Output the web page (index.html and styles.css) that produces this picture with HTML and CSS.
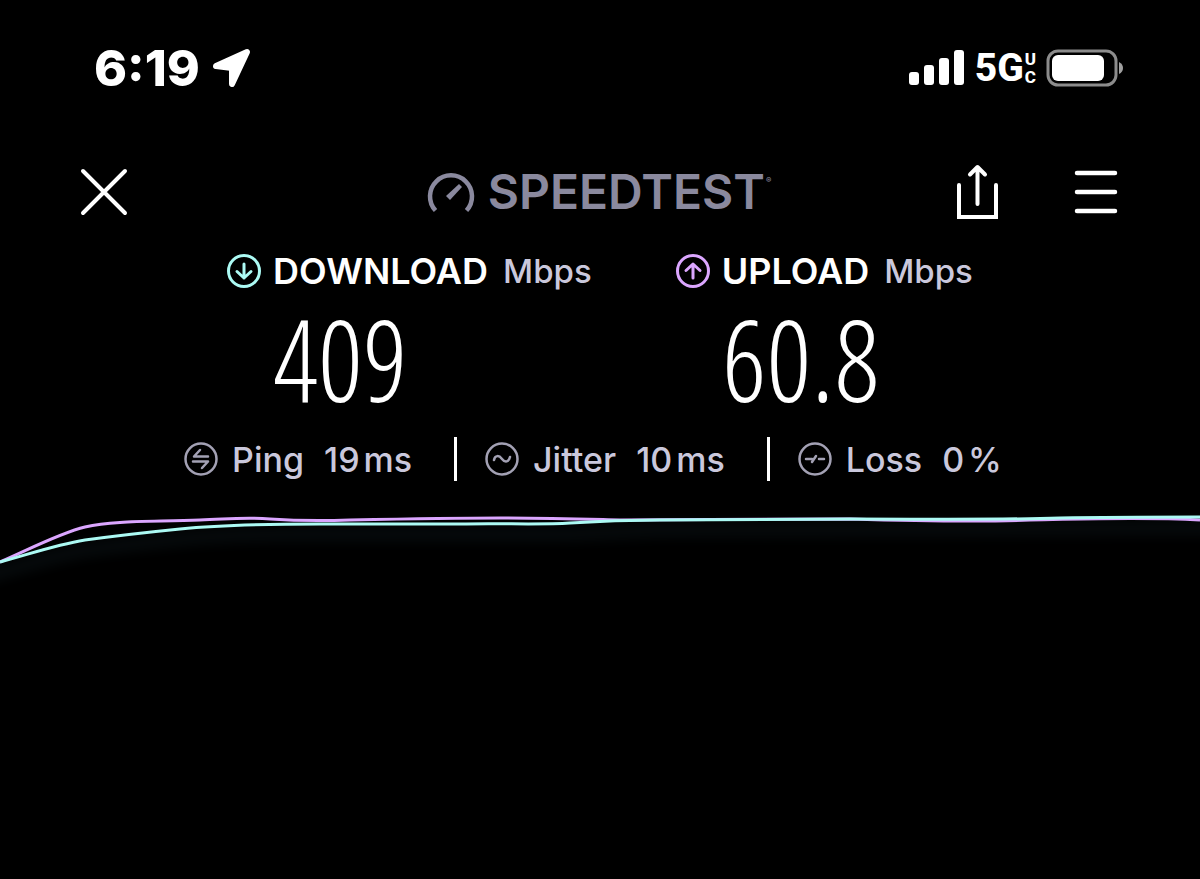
FILE: index.html
```
<!DOCTYPE html>
<html lang="en">
<head>
    <meta charset="UTF-8">
    <meta name="viewport" content="width=device-width, initial-scale=1.0">
    <title>Speedtest Result</title>
    <link rel="stylesheet" href="styles.css">
</head>
<body>
    <div class="status-bar">
        <div class="status-left">
            <span class="time">6:19</span>
            <svg width="40" height="40" viewBox="0 0 40 40" aria-hidden="true">
                <path d="M4 18 L35 4 L20 36 L20 20 Z" fill="#fff" stroke="#fff" stroke-width="6" stroke-linejoin="round"/>
            </svg>
        </div>
        <div class="status-right">
            <svg width="56" height="36" viewBox="0 0 56 36" fill="#fff" aria-hidden="true">
                <rect x="0" y="22" width="10" height="13" rx="3"/>
                <rect x="15" y="15" width="10" height="20" rx="3"/>
                <rect x="30" y="8" width="10" height="27" rx="3"/>
                <rect x="45" y="0" width="10" height="35" rx="3"/>
            </svg>
            <span class="network">5G</span>
            <span class="network-band"><span>U</span><span>C</span></span>
            <svg width="78" height="38" viewBox="0 0 78 38" aria-hidden="true">
                <rect x="2" y="2" width="68" height="34" rx="10" fill="none" stroke="#8c8c8c" stroke-width="3"/>
                <rect x="6" y="6" width="52" height="26" rx="6" fill="#fff"/>
                <path d="M73 13 Q77 15 77 19 Q77 23 73 25 Z" fill="#a0a0a0"/>
            </svg>
        </div>
    </div>

    <header class="header">
        <button type="button" class="icon-button close" aria-label="Close">
            <svg width="48" height="48" viewBox="0 0 48 48" fill="none" stroke="#fff" stroke-width="4" stroke-linecap="round">
                <path d="M3 3 L45 45 M45 3 L3 45"/>
            </svg>
        </button>
        <h1 class="logo">
            <svg width="48" height="42" viewBox="0 0 48 42" fill="none" aria-hidden="true">
                <path d="M8.500 39.500 A21 21 0 1 1 39.500 39.500" stroke="#8a899e" stroke-width="4.500"/>
                <path d="M32 13 L35 16 L23 29 L19 25 Z" fill="#8a899e"/>
            </svg>
            <span>SPEEDTEST</span><sup>®</sup>
        </h1>
        <div class="actions">
            <button type="button" class="icon-button" aria-label="Share">
                <svg width="44" height="56" viewBox="0 0 44 56" fill="none" stroke="#fff" stroke-width="4" stroke-linecap="round">
                    <path d="M3 21 V53 H40 V21"/>
                    <path d="M21.500 40 V3 M14 10.500 L21.500 3 L29 10.500" stroke-linejoin="round"/>
                </svg>
            </button>
            <button type="button" class="icon-button" aria-label="Menu">
                <svg width="44" height="44" viewBox="0 0 44 44" stroke="#fff" stroke-width="4.500" stroke-linecap="round">
                    <path d="M3 3 H41 M3 22 H41 M3 41 H41"/>
                </svg>
            </button>
        </div>
    </header>

    <main>
        <section class="results">
            <div class="result">
                <h2>
                    <svg width="34" height="34" viewBox="0 0 34 34" fill="none" stroke="#acfaf4" stroke-width="3" stroke-linecap="round" stroke-linejoin="round" aria-hidden="true">
                        <circle cx="17" cy="17" r="15.500"/>
                        <path d="M17 10 V24 M10 17.500 L17 24 L24 17.500"/>
                    </svg>
                    <span>DOWNLOAD</span>
                    <span class="unit">Mbps</span>
                </h2>
                <p class="speed">409</p>
            </div>
            <div class="result">
                <h2>
                    <svg width="34" height="34" viewBox="0 0 34 34" fill="none" stroke="#dba6ff" stroke-width="3" stroke-linecap="round" stroke-linejoin="round" aria-hidden="true">
                        <circle cx="17" cy="17" r="15.500"/>
                        <path d="M17 24 V10 M10 16.500 L17 10 L24 16.500"/>
                    </svg>
                    <span>UPLOAD</span>
                    <span class="unit">Mbps</span>
                </h2>
                <p class="speed">60.8</p>
            </div>
        </section>

        <ul class="stats">
            <li>
                <svg width="34" height="34" viewBox="0 0 34 34" fill="none" stroke="#a3a1b4" stroke-width="2.500" stroke-linecap="round" stroke-linejoin="round" aria-hidden="true">
                    <circle cx="17" cy="17" r="15.500"/>
                    <path d="M24 14.500 H10 L16 8 M9 19.500 H24 L18 26"/>
                </svg>
                <span class="name">Ping</span>
                <span class="value">19<small>ms</small></span>
            </li>
            <li>
                <svg width="34" height="34" viewBox="0 0 34 34" fill="none" stroke="#a3a1b4" stroke-width="2.500" stroke-linecap="round" aria-hidden="true">
                    <circle cx="17" cy="17" r="15.500"/>
                    <path d="M9 18 C10 13 14 13 17 17 S24 20 25 15"/>
                </svg>
                <span class="name">Jitter</span>
                <span class="value">10<small>ms</small></span>
            </li>
            <li>
                <svg width="34" height="34" viewBox="0 0 34 34" fill="none" stroke="#a3a1b4" stroke-width="2.500" stroke-linecap="round" stroke-linejoin="round" aria-hidden="true">
                    <circle cx="17" cy="17" r="15.500"/>
                    <path d="M8 17 H14 M14 20 L18 14 M21 17 H26"/>
                </svg>
                <span class="name">Loss</span>
                <span class="value">0<small>%</small></span>
            </li>
        </ul>

        <svg class="chart" viewBox="0 0 1200 100" preserveAspectRatio="none" role="img" aria-label="Download and upload speed over time">
            <defs>
                <filter id="blur" filterUnits="userSpaceOnUse" x="0" y="0" width="1200" height="100">
                    <feGaussianBlur stdDeviation="6"/>
                </filter>
            </defs>
            <path class="glow" filter="url(#blur)" d="M-30 82 L0 72 C30 64 55 55 85 50 C115 46 150 42 180 39 C220 35 270 34 320 34 H570 L660 30 L1230 28"/>
            <path class="upload-line" d="M0 62 C30 49 60 33 85 27 C115 20 155 22 200 20 C230 19 245 17 270 19 C300 21 320 21 350 20 C400 19 450 18 500 18 C550 18 580 19 620 20 C700 19 760 20 850 19 C920 21 980 22 1030 20 C1090 19 1140 17 1200 20"/>
            <path class="download-line" d="M0 62 C30 54 55 45 85 40 C115 36 150 32 180 29 C220 25 270 24 320 24 H460 C500 23 540 25 570 23 C600 21 620 20 660 20 C720 20 780 19 850 19 C930 19 1000 20 1060 18 C1110 17 1150 17 1200 17"/>
        </svg>
    </main>
</body>
</html>
```

FILE: styles.css
```
* {
    margin: 0;
    padding: 0;
    box-sizing: border-box;
}

body {
    font-family: Inter, "Liberation Sans", sans-serif;
    background-color: #000;
    color: #fff;
    min-height: 100vh;
}

svg {
    display: block;
    flex-shrink: 0;
}

/* Phone status bar */
.status-bar {
    display: flex;
    justify-content: space-between;
    align-items: center;
    height: 96px;
    padding: 40px 76px 0 94px;
}

.status-left,
.status-right {
    display: flex;
    align-items: center;
}

.status-left {
    gap: 12px;
}

.status-right {
    gap: 10px;
}

.time {
    font-size: 50px;
    font-weight: 800;
    line-height: 54px;
}

.network {
    font-family: Roboto, sans-serif;
    font-size: 39px;
    font-weight: 800;
    line-height: 56px;
}

.network-band {
    display: flex;
    flex-direction: column;
    margin-left: -9px;
    font-family: Roboto, sans-serif;
    font-size: 17px;
    font-weight: 800;
    line-height: 18px;
}

/* Top navigation */
.header {
    display: grid;
    grid-template-columns: 1fr auto 1fr;
    align-items: center;
    height: 60px;
    margin-top: 66px;
    padding: 0 82px 0 80px;
}

.icon-button {
    background: none;
    border: none;
    cursor: pointer;
}

.close {
    justify-self: start;
}

.logo {
    display: flex;
    align-items: center;
    gap: 13px;
    color: #8a899e;
    font-size: 48px;
    font-weight: 600;
    line-height: 60px;
}

.logo sup {
    align-self: flex-start;
    margin-left: -12px;
    font-size: 8px;
    line-height: 36px;
}

.actions {
    display: flex;
    justify-content: flex-end;
    align-items: center;
    gap: 74px;
}

/* Download and upload */
.results {
    display: flex;
    justify-content: center;
    gap: 84px;
    margin-top: 28px;
}

.result h2 {
    display: flex;
    align-items: center;
    gap: 12px;
    font-size: 36px;
    font-weight: 600;
    line-height: 42px;
}

.unit {
    margin-left: 3px;
    color: #cac8dc;
    font-size: 33px;
    font-weight: 500;
}

.speed {
    margin-bottom: 10px;
    padding-left: 46px;
    font-family: "Open Sans Condensed Light", Roboto, sans-serif;
    font-size: 112px;
    font-weight: 200;
    line-height: 134px;
}

/* Ping, jitter and loss */
.stats {
    display: flex;
    justify-content: center;
    list-style: none;
    margin-top: 1px;
    color: #cac8dc;
    font-size: 34px;
    font-weight: 500;
}

.stats li {
    display: flex;
    align-items: center;
    height: 44px;
    padding: 0 42px 0 28px;
}

.stats li + li {
    border-left: 3px solid #fff;
}

.name {
    margin: 0 20px 0 14px;
}

.value small {
    margin-left: 4px;
    font-size: 34px;
}

/* Speed graph */
.chart {
    width: 100%;
    height: 100px;
    margin-top: 19px;
}

.chart path {
    vector-effect: non-scaling-stroke;
}

.glow,
.upload-line,
.download-line {
    fill: none;
    stroke-width: 3;
}

.glow {
    stroke: #6fb8d8;
    stroke-width: 16;
    opacity: 0.05;
}

.upload-line {
    stroke: #dba6ff;
}

.download-line {
    stroke: #acfaf4;
}
```
